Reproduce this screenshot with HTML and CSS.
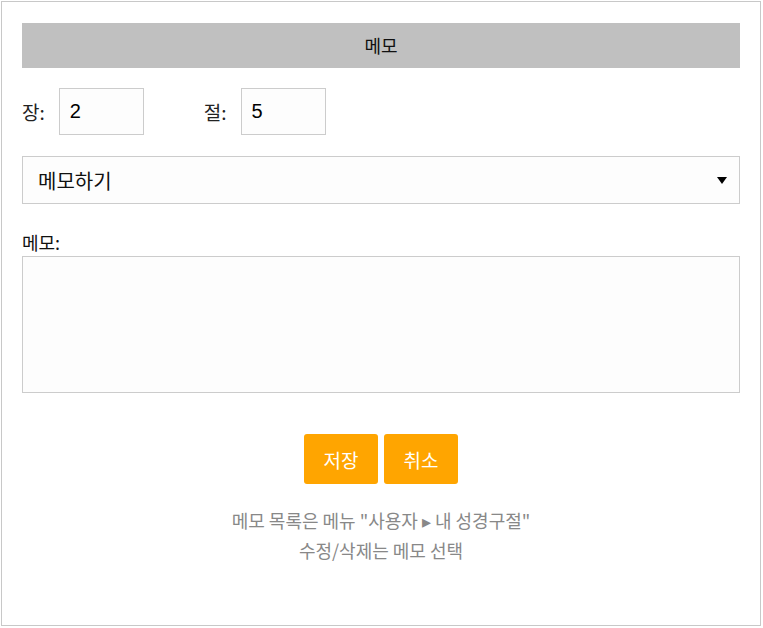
FILE: index.html
```html
<!DOCTYPE html>
<html>
<head>
<meta name="viewport" content="width=device-width, initial-scale=1">
<link rel="stylesheet" href="styles.css">
</head>
<body>

<div class="memo-box">
  <div class="memo-title">메모</div>

  <div class="verse-row">
    <label class="verse-field">장:
      <input class="verse-input" type="text" value="2">
    </label>
    <label class="verse-field">절:
      <input class="verse-input" type="text" value="5">
    </label>
  </div>

  <div class="select-wrap">
    <select class="memo-select">
      <option>메모하기</option>
    </select>
    <span class="select-arrow"></span>
  </div>

  <label class="memo-label" for="memo-text">메모:</label>
  <textarea id="memo-text" class="memo-text"></textarea>

  <div class="buttons">
    <button class="btn">저장</button>
    <button class="btn">취소</button>
  </div>

  <p class="hint">메모 목록은 메뉴 "사용자 &#9656; 내 성경구절"<br>수정/삭제는 메모 선택</p>
</div>

</body>
</html>
```

FILE: styles.css
```css
body {
  margin: 0;
  padding: 1px;
  font-family: "Noto Sans CJK KR", "Liberation Sans", sans-serif;
  background-color: #fff;
}

.memo-box {
  width: 718px;
  height: 602px;
  padding: 21px 20px 0 20px;
  border: 1px solid #c8c8c8;
}

.memo-title {
  background-color: #c0c0c0;
  height: 45px;
  line-height: 45px;
  text-align: center;
  font-size: 18px;
  color: #111;
}

.verse-row {
  display: flex;
  gap: 60px;
  margin-top: 20px;
}

.verse-field {
  display: flex;
  align-items: center;
  gap: 14px;
  font-size: 19px;
  color: #222;
}

.verse-input {
  width: 85px;
  height: 47px;
  box-sizing: border-box;
  border: 1px solid #ccc;
  background-color: #fdfdfd;
  padding: 0 10px;
  font-family: "Liberation Sans", sans-serif;
  font-size: 20px;
  color: #000;
}

.select-wrap {
  position: relative;
  margin-top: 21px;
}

.memo-select {
  width: 100%;
  height: 48px;
  box-sizing: border-box;
  border: 1px solid #ccc;
  background-color: #fdfdfd;
  padding: 0 15px;
  font-family: "Noto Sans CJK KR", sans-serif;
  font-size: 20px;
  color: #111;
  appearance: none;
  -webkit-appearance: none;
  border-radius: 0;
}

.select-arrow {
  position: absolute;
  right: 13px;
  top: 21px;
  width: 0;
  height: 0;
  border-left: 5px solid transparent;
  border-right: 5px solid transparent;
  border-top: 7px solid #000;
  pointer-events: none;
}

.memo-label {
  display: block;
  margin-top: 26px;
  font-size: 18px;
  line-height: 24px;
  color: #111;
}

.memo-text {
  display: block;
  width: 100%;
  height: 137px;
  box-sizing: border-box;
  margin-top: 2px;
  border: 1px solid #ccc;
  background-color: #fdfdfd;
  resize: none;
}

.buttons {
  display: flex;
  justify-content: center;
  gap: 6px;
  margin-top: 41px;
}

.btn {
  width: 74px;
  height: 50px;
  border: none;
  border-radius: 3px;
  background-color: #ffa500;
  color: #fff;
  font-family: "Noto Sans CJK KR", sans-serif;
  font-size: 19px;
}

.hint {
  margin: 21px 0 0;
  text-align: center;
  font-size: 18px;
  line-height: 30px;
  color: #888;
}
```
